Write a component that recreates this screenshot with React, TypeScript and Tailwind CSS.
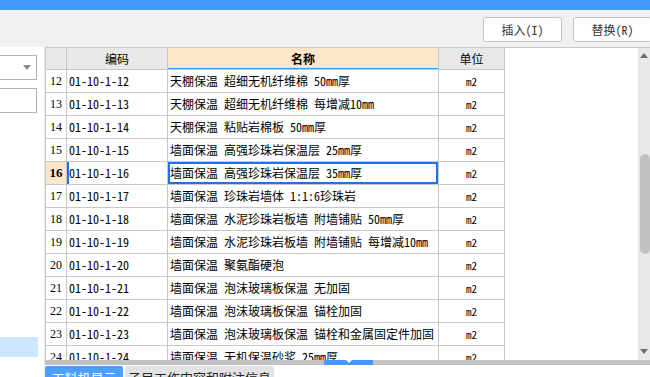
import React from "react";

const rows: [string, string, string][] = [
  ["12", "01-10-1-12", "天棚保温 超细无机纤维棉 50mm厚"],
  ["13", "01-10-1-13", "天棚保温 超细无机纤维棉 每增减10mm"],
  ["14", "01-10-1-14", "天棚保温 粘贴岩棉板 50mm厚"],
  ["15", "01-10-1-15", "墙面保温 高强珍珠岩保温层 25mm厚"],
  ["16", "01-10-1-16", "墙面保温 高强珍珠岩保温层 35mm厚"],
  ["17", "01-10-1-17", "墙面保温 珍珠岩墙体 1:1:6珍珠岩"],
  ["18", "01-10-1-18", "墙面保温 水泥珍珠岩板墙 附墙铺贴 50mm厚"],
  ["19", "01-10-1-19", "墙面保温 水泥珍珠岩板墙 附墙铺贴 每增减10mm"],
  ["20", "01-10-1-20", "墙面保温 聚氨酯硬泡"],
  ["21", "01-10-1-21", "墙面保温 泡沫玻璃板保温 无加固"],
  ["22", "01-10-1-22", "墙面保温 泡沫玻璃板保温 锚栓加固"],
  ["23", "01-10-1-23", "墙面保温 泡沫玻璃板保温 锚栓和金属固定件加固"],
  ["24", "01-10-1-24", "墙面保温 无机保温砂浆 25mm厚"],
];

function Tri({ down = false, color = "#6f6f6f" }: { down?: boolean; color?: string }) {
  return (
    <svg width="8" height="5" viewBox="0 0 8 5" className="block">
      {down ? <polygon points="0,0 8,0 4,5" fill={color} /> : <polygon points="0,5 8,5 4,0" fill={color} />}
    </svg>
  );
}

export default function App() {
  return (
    <div className="w-[650px] h-[377px] overflow-hidden bg-white flex flex-col text-[12px] text-black font-['Noto_Sans_Mono_CJK_SC','Noto_Sans_CJK_SC',sans-serif]">
      <div className="h-[10px] bg-[#4499ff] shrink-0" />
      <div className="h-[37px] shrink-0 bg-[#f0f0f0] flex items-start justify-end gap-[11px] pt-[7px] mr-[-2px]">
        <button className="w-[79px] h-[25px] bg-white border border-[#c4c4c4] rounded-[3px] text-[12px] text-[#333]">插入(I)</button>
        <button className="w-[79px] h-[25px] bg-white border border-[#c4c4c4] rounded-[3px] text-[12px] text-[#333]">替换(R)</button>
      </div>
      <div className="flex flex-1 min-h-0">
        <div className="w-[44px] shrink-0 bg-white flex flex-col">
          <div className="mt-[8px] -ml-px w-[38px] h-[25px] border border-[#b4b4b4] flex items-center justify-end pr-[5px]">
            <Tri down color="#8a8a8a" />
          </div>
          <div className="mt-[8px] -ml-px w-[38px] h-[25px] border border-[#b4b4b4]" />
          <div className="flex-1" />
          <div className="w-[38px] h-[20px] bg-[#cce6ff] mb-[20px]" />
        </div>
        <div className="w-px bg-[#ececec] shrink-0" />
        <div className="flex-1 flex flex-col min-w-0">
          <div className="h-[313px] flex border-t border-[#c8c8c8] shrink-0">
            <div className="w-[460px] shrink-0 overflow-hidden flex flex-col">
              <div className="flex h-[22px] shrink-0 border-b border-[#c8c8c8]">
                <div className="w-[22px] border-l border-r border-[#c8c8c8] bg-[#e8e8e8]" />
                <div className="w-[101px] border-r border-[#c8c8c8] bg-[#e8e8e8] flex items-center justify-center">编码</div>
                <div className="w-[271px] border-r border-[#c8c8c8] bg-[#fde6c9] flex items-center justify-center font-bold shadow-[inset_0_-1px_0_#3d95f5]">名称</div>
                <div className="w-[66px] border-r border-[#c8c8c8] bg-[#e8e8e8] flex items-center justify-center">单位</div>
              </div>
              {rows.map(([n, code, name]) => {
                const sel = n === "16";
                return (
                  <div key={n} className="flex h-[23px] shrink-0 border-b border-[#c8c8c8]">
                    <div
                      className={
                        sel
                          ? "w-[22px] border-l border-r border-[#c8c8c8] bg-[#fde6c9] flex items-center justify-center font-bold text-[13px] font-['Liberation_Serif',serif]"
                          : "w-[22px] border-l border-r border-[#c8c8c8] flex items-center justify-center text-[12px] font-['Liberation_Serif',serif]"
                      }
                    >
                      {n}
                    </div>
                    <div
                      className={
                        sel
                          ? "w-[101px] border-r border-[#c8c8c8] flex items-center pl-[2px] whitespace-pre shadow-[inset_2px_0_0_#1a73e8]"
                          : "w-[101px] border-r border-[#c8c8c8] flex items-center pl-[2px] whitespace-pre"
                      }
                    >
                      {code}
                    </div>
                    <div
                      className={
                        sel
                          ? "w-[271px] border-r border-[#c8c8c8] flex items-center pl-[2px] whitespace-pre overflow-hidden shadow-[inset_0_0_0_2px_#1a73e8]"
                          : "w-[271px] border-r border-[#c8c8c8] flex items-center pl-[2px] whitespace-pre overflow-hidden"
                      }
                    >
                      {name}
                    </div>
                    <div className="w-[66px] border-r border-[#c8c8c8] flex items-center justify-center text-[11px]">m2</div>
                  </div>
                );
              })}
            </div>
            <div className="flex-1 bg-white" />
            <div className="w-[12px] shrink-0 bg-[#e8e8e8] flex flex-col items-center pt-[5px] pb-[6px]">
              <Tri />
              <div className="mt-[96px] h-[100px] w-[10px] self-end rounded-[5px] bg-[#c2c2c2]" />
              <div className="flex-1" />
              <Tri down />
            </div>
          </div>
          <div className="h-[5px] shrink-0 bg-[#c2c2c2] flex">
            <div className="ml-[279px] w-[49px] bg-[#4499ff] flex items-start justify-center">
              <svg width="6" height="3" viewBox="0 0 6 3" className="block">
                <polygon points="0,0 6,0 3,3" fill="#ffffff" />
              </svg>
            </div>
          </div>
          <div className="h-px shrink-0" />
          <div className="flex gap-[2px] shrink-0">
            <div className="w-[78px] h-[24px] rounded-t-[2px] bg-[#4da0ff] text-white text-[13px] flex items-center justify-center">工料机显示</div>
            <div className="w-[149px] h-[24px] rounded-t-[2px] bg-[#e2e2e2] text-[#222] text-[13px] flex items-center justify-center">子目工作内容和附注信息</div>
          </div>
        </div>
      </div>
    </div>
  );
}
